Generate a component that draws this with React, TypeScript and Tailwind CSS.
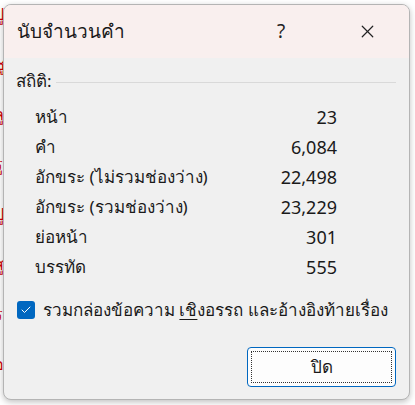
import { Check, X } from "lucide-react";

const stats = [
  { label: "หน้า", value: "23" },
  { label: "คำ", value: "6,084" },
  { label: "อักขระ (ไม่รวมช่องว่าง)", value: "22,498" },
  { label: "อักขระ (รวมช่องว่าง)", value: "23,229" },
  { label: "ย่อหน้า", value: "301" },
  { label: "บรรทัด", value: "555" },
];

export default function App() {
  return (
    <div
      className="relative w-[415px] h-[405px] overflow-hidden bg-white"
      style={{ fontFamily: '"Leelawadee UI", "Segoe UI", Tahoma, "Noto Sans", "DejaVu Sans", sans-serif' }}
    >
      {/* document behind the dialog */}
      <div className="flex flex-col gap-[30px] pt-[4px] text-[16px] leading-[20px] text-[#d00000] whitespace-nowrap -ml-[6px]">
        <div>ปู</div>
        <div>ชู</div>
        <div>ลู</div>
        <div>รู</div>
        <div>ปู</div>
        <div>สู</div>
        <div>ร</div>
        <div>อ</div>
        <div>น</div>
        <div>ต</div>
        <div className="ml-[6px] mt-[-16px]">ก่ากว่าเพลงนี้จะไพเราะยิ่งกว่าเพลงอื่นใดทั้งปวง</div>
      </div>

      {/* dialog */}
      <div className="absolute left-[3px] top-[4px] w-[407px] h-[396px] rounded-[8px] border border-[#b4b4b4] bg-[#f0f0f0] overflow-hidden flex flex-col shadow-[0_2px_6px_rgba(0,0,0,0.25)]">
        <div className="h-[53px] bg-[#f9efee] flex items-center pl-[13px] shrink-0">
          <span className="text-[19px] text-[#1a1a1a] flex-1">นับจำนวนคำ</span>
          <span className="text-[19px] text-[#222] w-[20px] text-center mr-[66px]">?</span>
          <X className="w-[21px] h-[21px] text-[#222] mr-[31px]" strokeWidth={1.4} />
        </div>

        <div className="flex flex-col px-[12px] pt-[8px] text-[17px] text-[#1a1a1a]">
          <div className="flex items-center gap-[4px] h-[30px]">
            <span>สถิติ:</span>
            <div className="flex-1 h-px bg-[#d9d9d9] mt-[2px] mr-[1px]" />
          </div>
          <div className="flex flex-col mt-[6px] pl-[19px] w-[321px]">
            {stats.map((s) => (
              <div key={s.label} className="flex justify-between items-center h-[30px]">
                <span>{s.label}</span>
                <span className="text-[18px]">{s.value}</span>
              </div>
            ))}
          </div>

          <div className="flex items-center gap-[8px] mt-[15px] ml-[1px]">
            <div className="w-[18px] h-[18px] rounded-[3px] bg-[#0067c0] flex items-center justify-center shrink-0">
              <Check className="w-[12px] h-[12px] text-white" strokeWidth={2} />
            </div>
            <span className="whitespace-nowrap">
              รวมกล่องข้อความ <span className="underline underline-offset-[3px]">เชิ</span>งอรรถ และอ้างอิงท้ายเรื่อง
            </span>
          </div>

          <div className="flex justify-end mt-[24px] mr-[1px]">
            <button className="w-[149px] h-[40px] rounded-[4px] border border-[#0067c0] bg-[#fdfdfd] p-[3px]">
              <div className="w-full h-full border border-dotted border-[#333] flex items-center justify-center text-[17px] text-[#1a1a1a]">
                ปิด
              </div>
            </button>
          </div>
        </div>
      </div>
    </div>
  );
}
